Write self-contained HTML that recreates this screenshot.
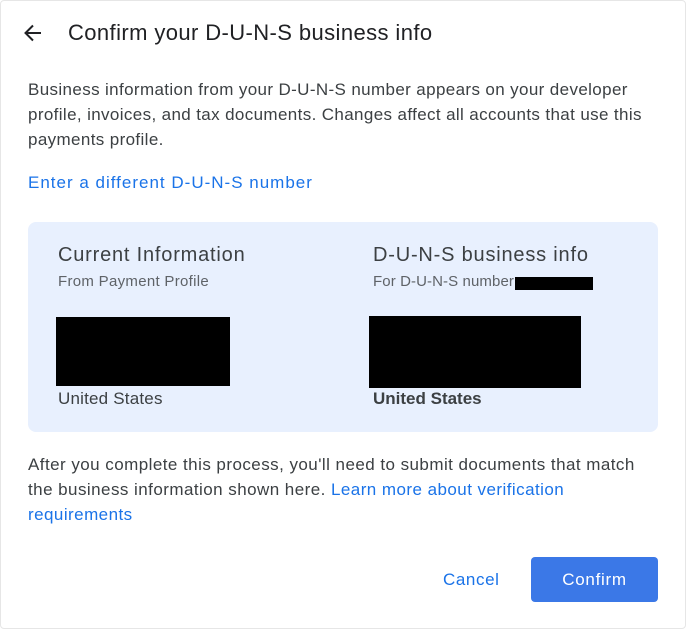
<!DOCTYPE html>
<html><head><style>
body{margin:0;width:686px;height:629px;background:#fff;font-family:"Liberation Sans",Arial,sans-serif;position:relative;overflow:hidden;color:#3c4043}
.a{position:absolute;white-space:nowrap}
</style></head><body>
<div style="position:absolute;left:0;top:0;width:684px;height:627px;border:1px solid #e6e6e6;border-radius:4px"></div>
<svg class="a" style="left:21px;top:21px" width="24" height="24" viewBox="0 0 24 24"><path d="M20 12H5M12 4.5L4.5 12 12 19.5" stroke="#202124" stroke-width="2" fill="none"/></svg>
<div class="a" style="left:68px;top:20px;font-size:22px;letter-spacing:0.4px;color:#202124">Confirm your D-U-N-S business info</div>
<div class="a" style="left:28px;top:77px;font-size:17px;line-height:25px;letter-spacing:0.37px;color:#3c4043">Business information from your D-U-N-S number appears on your developer<br>profile, invoices, and tax documents. Changes affect all accounts that use this<br>payments profile.</div>
<div class="a" style="left:28px;top:173px;font-size:17px;letter-spacing:1px;color:#1a73e8">Enter a different D-U-N-S number</div>
<div class="a" style="left:28px;top:222px;width:630px;height:210px;background:#e8f0fe;border-radius:8px"></div>
<div class="a" style="left:58px;top:244px;font-size:20px;letter-spacing:0.8px;color:#3c4043">Current Information</div>
<div class="a" style="left:58px;top:273px;font-size:15px;letter-spacing:0.3px;color:#5f6368">From Payment Profile</div>
<div class="a" style="left:56px;top:317px;width:174px;height:69px;background:#000"></div>
<div class="a" style="left:58px;top:389px;font-size:17px;letter-spacing:0.2px;color:#3c4043">United States</div>
<div class="a" style="left:373px;top:244px;font-size:20px;letter-spacing:0.8px;color:#3c4043">D-U-N-S business info</div>
<div class="a" style="left:373px;top:273px;font-size:15px;letter-spacing:0.1px;color:#5f6368">For D-U-N-S number</div>
<div class="a" style="left:515px;top:277px;width:78px;height:13px;background:#000"></div>
<div class="a" style="left:369px;top:316px;width:212px;height:72px;background:#000"></div>
<div class="a" style="left:373px;top:389px;font-size:17px;font-weight:bold;color:#3c4043">United States</div>
<div class="a" style="left:28px;top:452px;font-size:17px;line-height:25px;letter-spacing:0.45px">After you complete this process, you'll need to submit documents that match<br>the business information shown here. <span style="color:#1a73e8">Learn more about verification</span><br><span style="color:#1a73e8">requirements</span></div>
<div class="a" style="left:443px;top:570px;font-size:17px;letter-spacing:0.6px;color:#1a73e8">Cancel</div>
<div class="a" style="left:531px;top:557px;width:127px;height:45px;background:#3b78e7;border-radius:4px;color:#fff;font-size:17px;letter-spacing:0.7px;text-align:center;line-height:45px">Confirm</div>
</body></html>
